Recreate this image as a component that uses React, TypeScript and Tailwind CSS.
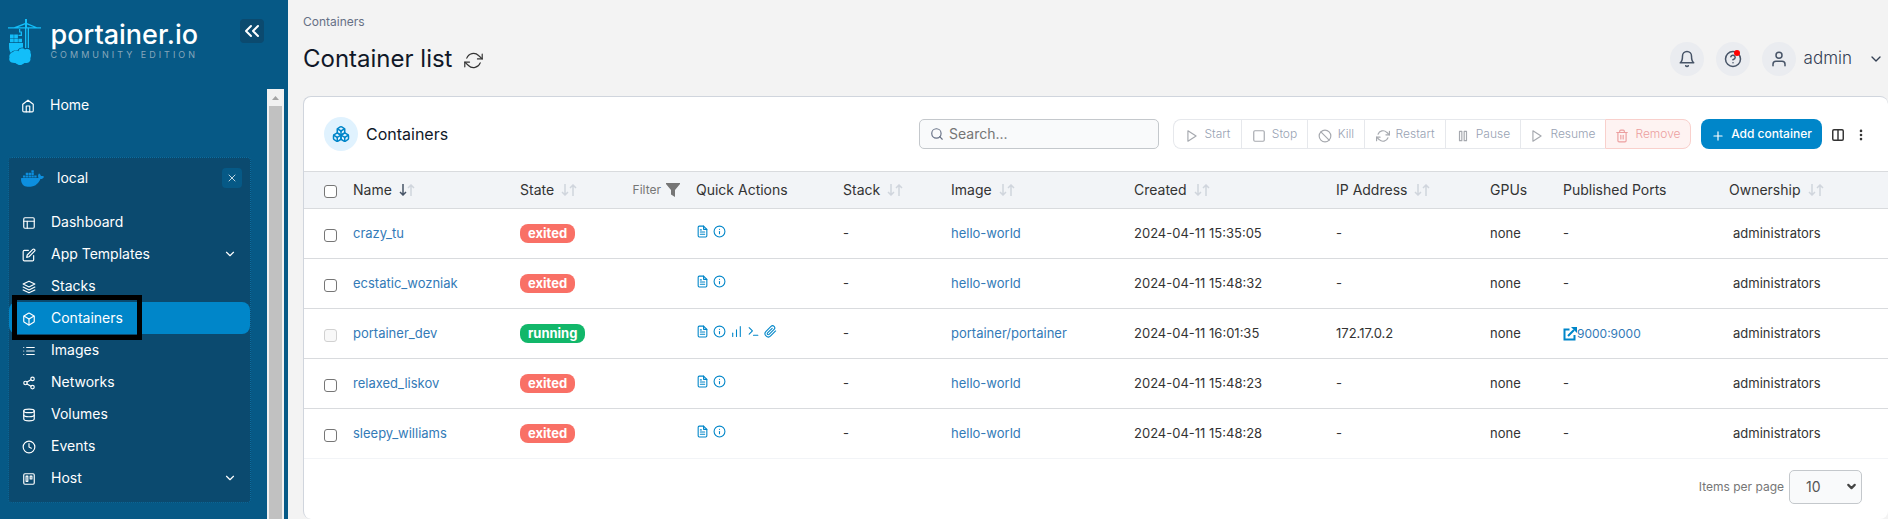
import type { ComponentType, ReactNode } from 'react';
import {
  FiBell, FiBox, FiChevronDown, FiClock, FiColumns, FiDatabase, FiEdit, FiFileText, FiHelpCircle,
  FiHome, FiInfo, FiLayers, FiLayout, FiList, FiMoreVertical, FiPaperclip, FiPause, FiPlay, FiPlus,
  FiRefreshCw, FiSearch, FiShare2, FiSlash, FiSquare, FiTerminal, FiTrash2, FiTrello, FiUser, FiX,
} from 'react-icons/fi';
import { SiDocker } from 'react-icons/si';
import { Boxes, ChartNoAxesColumnIncreasing, ChevronsLeft } from 'lucide-react';

type IconType = ComponentType<{ className?: string }>;

const navItems: { label: string; icon: IconType; active?: boolean; expandable?: boolean }[] = [
  { label: 'Dashboard', icon: FiLayout },
  { label: 'App Templates', icon: FiEdit, expandable: true },
  { label: 'Stacks', icon: FiLayers },
  { label: 'Containers', icon: FiBox, active: true },
  { label: 'Images', icon: FiList },
  { label: 'Networks', icon: FiShare2 },
  { label: 'Volumes', icon: FiDatabase },
  { label: 'Events', icon: FiClock },
  { label: 'Host', icon: FiTrello, expandable: true },
];

const bulkActions: { label: string; icon: IconType; width: string }[] = [
  { label: 'Start', icon: FiPlay, width: 'w-[68px]' },
  { label: 'Stop', icon: FiSquare, width: 'w-[66px]' },
  { label: 'Kill', icon: FiSlash, width: 'w-[57px]' },
  { label: 'Restart', icon: FiRefreshCw, width: 'w-[81px]' },
  { label: 'Pause', icon: FiPause, width: 'w-[75px]' },
  { label: 'Resume', icon: FiPlay, width: 'w-[85px]' },
];

const containers = [
  { name: 'crazy_tu', state: 'exited', image: 'hello-world', created: '2024-04-11 15:35:05', ip: '-', port: '' },
  { name: 'ecstatic_wozniak', state: 'exited', image: 'hello-world', created: '2024-04-11 15:48:32', ip: '-', port: '' },
  { name: 'portainer_dev', state: 'running', image: 'portainer/portainer', created: '2024-04-11 16:01:35', ip: '172.17.0.2', port: '9000:9000' },
  { name: 'relaxed_liskov', state: 'exited', image: 'hello-world', created: '2024-04-11 15:48:23', ip: '-', port: '' },
  { name: 'sleepy_williams', state: 'exited', image: 'hello-world', created: '2024-04-11 15:48:28', ip: '-', port: '' },
];

function SortArrows({ active = false }: { active?: boolean }) {
  return (
    <svg viewBox="0 0 16 12" className="ml-[7px] h-3 w-4 shrink-0" fill="none" strokeWidth="1.5">
      <path d="M4 0V11M1 8L4 11L7 8" stroke={active ? '#475467' : '#d0d5dd'} />
      <path d="M12 12V1M9 4L12 1L15 4" stroke="#d0d5dd" />
    </svg>
  );
}

function Heading({ children, sort }: { children: ReactNode; sort?: 'active' | 'idle' }) {
  return (
    <th className="px-2 text-left font-normal">
      <div className="flex items-center whitespace-nowrap">
        {children}
        {sort && <SortArrows active={sort === 'active'} />}
      </div>
    </th>
  );
}

function Checkbox({ label, disabled = false }: { label: string; disabled?: boolean }) {
  return (
    <input
      type="checkbox"
      aria-label={label}
      disabled={disabled}
      className="mt-[3px] block size-[13px] appearance-none rounded-[3px] border border-[#767676] bg-white disabled:border-[#d1d1d1] disabled:bg-[#f8f8f8]"
    />
  );
}

function RoundButton({ label, children }: { label: string; children: ReactNode }) {
  return (
    <button aria-label={label} className="relative flex size-[34px] items-center justify-center rounded-full bg-[#eaecf0] text-[#475467]">
      {children}
    </button>
  );
}

function Sidebar() {
  return (
    <aside className="flex w-72 shrink-0 flex-col bg-[#065986] text-white">
      <div className="flex h-[89px] shrink-0 items-start pl-2 pr-6 pt-[19px]">
        <svg viewBox="0 0 33 46" className="h-[46px] w-[33px] shrink-0" fill="#13bef9">
          <path d="M17 0h2v4l10 4.200h4v1.300H21V29h-1.300V9.500H18.300V29H17V9.500H0V8.200h6l11-4.200zM17 5.500l-7 2.700h7zM19 5.500v2.700h7z" />
          <path d="M11 10h1.300v2.500H14V17h-3.500v-1.300h2.200V13.600H11zM2 15.500h3.700v3.700H2zM6.200 15.500h3.700v3.700H6.200zM2 19.800h3.700v3.500H2zM6.200 19.800h3.700v3.500H6.200zM10.400 19.800H14v3.500h-3.600z" />
          <path d="M1 24h14V28.500c-3 0-4.500 1-5.500 3C6.500 31 4 32 3 34C1.500 32.500 1 30 1 27z" />
          <path d="M5 33c2-2 4-1.500 5.500-.8C11 29 15 28.500 17 30.500c4-1.500 6 1 5.500 3.500c1.500 3-.5 4.500 0 6.500c-.5 3-3 3.500-5.500 3.500c-1.500 0-2 2-5 2s-3.500-2-5.500-2C2 44 .5 41 1.500 38.500C.5 36 3 33.500 5 33z" />
        </svg>
        <div className="flex flex-1 flex-col items-end pr-[42px]">
          <span className="text-[27px] font-medium leading-8">portainer.io</span>
          <span className="whitespace-nowrap text-[9px] leading-2 tracking-[3px] text-[#86a7bb]">COMMUNITY EDITION</span>
        </div>
        <button aria-label="Collapse sidebar" className="flex size-6 items-center justify-center rounded-sm bg-[#0b4a6f]">
          <ChevronsLeft className="size-6" strokeWidth={2} />
        </button>
      </div>
      <div className="flex flex-1 pr-1">
        <nav className="flex flex-1 flex-col pl-2 pr-4 text-sm">
          <a href="#home" className="flex h-8 items-center gap-[15px] pl-[13px]">
            <FiHome className="mt-0.5 size-[14px]" />
            Home
          </a>
          <div className="mt-9 rounded border border-dotted border-[#0a6fa3] bg-[#0b4a6f] pb-2">
            <div className="flex h-10 items-center pl-3 pr-2">
              <SiDocker className="size-[23px] text-[#0d8fdf]" />
              <span className="ml-[13px] flex-1">local</span>
              <button aria-label="Close environment" className="flex size-5 items-center justify-center rounded bg-[#065986]">
                <FiX className="size-3" strokeWidth={1.5} />
              </button>
            </div>
            <ul className="mt-2">
              {navItems.map(({ label, icon: Icon, active, expandable }) => (
                <li key={label} className="relative">
                  <a
                    href={'#' + label}
                    className={active ? 'flex h-8 items-center rounded-lg bg-[#0086c9] pl-[13px] pr-[13px]' : 'flex h-8 items-center pl-[13px] pr-[13px]'}
                  >
                    <Icon className="mt-0.5 size-[14px]" />
                    <span className="ml-[15px] flex-1">{label}</span>
                    {expandable && <FiChevronDown className="size-[14px]" />}
                  </a>
                  {active && <div className="pointer-events-none absolute -top-[7px] left-[3px] h-[45px] w-[130px] border-5 border-black" />}
                </li>
              ))}
            </ul>
          </div>
        </nav>
        <div className="flex w-[17px] flex-col bg-[#f1f1f1]">
          <svg viewBox="0 0 17 17" className="h-[17px] w-[17px] shrink-0">
            <path d="M8.500 7L12 11H5z" fill="#a3a3a3" />
          </svg>
          <div className="mx-0.5 flex-1 bg-[#c1c1c1]" />
        </div>
      </div>
    </aside>
  );
}

function PageHeader() {
  return (
    <header className="pt-3">
      <div className="text-xs leading-5 text-[#667085]">Containers</div>
      <div className="mt-2.5 flex h-[34px] items-center">
        <h1 className="text-2xl text-[#101828]">Container list</h1>
        <button aria-label="Refresh" className="ml-3 mt-0.5 text-[#333333]">
          <FiRefreshCw className="size-[19px]" strokeWidth={1.5} />
        </button>
        <div className="ml-auto flex items-center gap-3 pr-1">
          <RoundButton label="Notifications"><FiBell className="size-[18px]" /></RoundButton>
          <RoundButton label="Help">
            <FiHelpCircle className="size-[18px]" />
            <span className="absolute right-2.5 top-2 size-1.5 rounded-full bg-[#ff0000]" />
          </RoundButton>
          <button className="flex items-center text-[17px] text-[#344054]">
            <span className="mr-2 flex size-[34px] items-center justify-center rounded-full bg-[#eaecf0] text-[#475467]">
              <FiUser className="size-[18px]" />
            </span>
            <span className="font-light">admin</span>
            <FiChevronDown className="ml-4 size-4" />
          </button>
        </div>
      </div>
    </header>
  );
}

function Toolbar() {
  return (
    <div className="flex h-[74px] items-center px-5">
      <span className="flex size-[34px] items-center justify-center rounded-full bg-[#e0f2fe] text-[#0086c9]">
        <Boxes className="size-[18px]" />
      </span>
      <h2 className="ml-2 text-base text-[#101828]">Containers</h2>
      <label className="ml-auto flex h-[30px] w-60 items-center rounded-[5px] border border-[#c4c8cc] bg-[#f9fafb] pl-2.5 text-[#667085]">
        <FiSearch className="size-[14px] shrink-0" />
        <input aria-label="Search" placeholder="Search..." className="ml-[5px] min-w-0 flex-1 bg-transparent text-sm outline-none placeholder:text-[#757575]" />
      </label>
      <div className="ml-3.5 flex h-[30px] text-xs font-light text-[#98a2b3]">
        {bulkActions.map(({ label, icon: Icon, width }) => (
          <button key={label} disabled className={width + ' flex items-center justify-center gap-1.5 border border-r-0 border-[#e6e8ec] first:rounded-l-lg'}>
            <Icon className="mt-1 size-[14px] text-[#a6a9af]" />
            {label}
          </button>
        ))}
        <button disabled className="flex w-[86px] items-center justify-center gap-1.5 rounded-r-lg border border-[#f9d0cc] bg-[#fef3f2] text-[#ec9f9f]">
          <FiTrash2 className="mt-1 size-[14px]" />
          Remove
        </button>
      </div>
      <button className="ml-2.5 flex h-[30px] w-[121px] items-center justify-center gap-1.5 rounded-lg bg-[#0086c9] text-xs font-medium text-white">
        <FiPlus className="mt-1 size-[14px]" />
        Add container
      </button>
      <button aria-label="Columns" className="ml-[9px] mt-0.5 text-[#333333]"><FiColumns className="size-[14px]" strokeWidth={2.5} /></button>
      <button aria-label="Table settings" className="ml-[9px] mt-0.5 text-[#333333]"><FiMoreVertical className="size-[14px]" strokeWidth={2.5} /></button>
    </div>
  );
}

function ContainerTable() {
  return (
    <table className="w-full table-fixed border-collapse">
      <colgroup>
        <col className="w-[41px]" />
        <col className="w-[167px]" />
        <col className="w-[176px]" />
        <col className="w-[147px]" />
        <col className="w-[108px]" />
        <col className="w-[183px]" />
        <col className="w-[202px]" />
        <col className="w-[154px]" />
        <col className="w-[73px]" />
        <col className="w-[166px]" />
        <col />
      </colgroup>
      <thead>
        <tr className="h-[37px] border-y border-[#d9dbde] bg-[#f2f4f7] text-sm text-[#333333]">
          <th className="pl-5"><Checkbox label="Select all containers" /></th>
          <Heading sort="active">Name</Heading>
          <th className="px-2 text-left font-normal">
            <div className="flex items-center">
              State
              <SortArrows />
              <button className="ml-auto flex items-center gap-[5px] text-xs text-[#767676]">
                Filter
                <svg viewBox="0 0 14 14" className="size-[14px]" fill="#767676"><path d="M0 0h14v1L9 7v7L5 11.500V7L0 1z" /></svg>
              </button>
            </div>
          </th>
          <Heading>Quick Actions</Heading>
          <Heading sort="idle">Stack</Heading>
          <Heading sort="idle">Image</Heading>
          <Heading sort="idle">Created</Heading>
          <Heading sort="idle">IP Address</Heading>
          <Heading>GPUs</Heading>
          <Heading>Published Ports</Heading>
          <Heading sort="idle">Ownership</Heading>
        </tr>
      </thead>
      <tbody className="text-[13px] text-[#333333]">
        {containers.map((c) => (
          <tr key={c.name} className="h-[50px] border-b border-[#d9dbde] last:border-[#f2f4f7]">
            <td className="pl-5"><Checkbox label={'Select ' + c.name} disabled={c.state === 'running'} /></td>
            <td className="px-2"><a href={'#' + c.name} className="text-[#337ab7]">{c.name}</a></td>
            <td className="px-2">
              <span
                className={
                  c.state === 'running'
                    ? 'inline-block h-[19px] rounded-lg bg-[#12b76a] px-2 font-bold leading-[19px] text-white'
                    : 'inline-block h-[19px] rounded-lg bg-[#f97066] px-2 font-bold leading-[19px] text-white'
                }
              >
                {c.state}
              </span>
            </td>
            <td className="px-2 text-[#0086c9]">
              <div className="mb-1 flex gap-1">
                <a href="#logs" aria-label="Logs"><FiFileText className="size-[13px]" /></a>
                <a href="#inspect" aria-label="Inspect"><FiInfo className="size-[13px]" /></a>
                {c.state === 'running' && (
                  <>
                    <a href="#stats" aria-label="Stats"><ChartNoAxesColumnIncreasing className="size-[13px]" /></a>
                    <a href="#console" aria-label="Console"><FiTerminal className="size-[13px]" /></a>
                    <a href="#attach" aria-label="Attach"><FiPaperclip className="size-[13px]" /></a>
                  </>
                )}
              </div>
            </td>
            <td className="px-2">-</td>
            <td className="px-2"><a href="#image" className="text-[#337ab7]">{c.image}</a></td>
            <td className="px-2">{c.created}</td>
            <td className="px-2">{c.ip}</td>
            <td className="px-2">none</td>
            <td className="px-2">
              {c.port ? (
                <a href="#port" className="flex items-center text-xs text-[#337ab7]">
                  <svg viewBox="0 0 14 14" className="size-[14px]" fill="none" stroke="#0086c9" strokeWidth="2">
                    <path d="M6.500 2.500H1.500V12.500H11.500V8M5 9L11 3" />
                    <path d="M8 0H14V6z" fill="#0086c9" stroke="none" />
                  </svg>
                  {c.port}
                </a>
              ) : '-'}
            </td>
            <td className="px-3">administrators</td>
          </tr>
        ))}
      </tbody>
    </table>
  );
}

export default function App() {
  return (
    <div className="flex min-h-screen bg-[#f3f3f3] font-['Inter',sans-serif]">
      <Sidebar />
      <main className="flex min-w-0 flex-1 flex-col pl-[15px]">
        <PageHeader />
        <section className="mt-5 flex-1 rounded-lg border border-b-0 border-r-0 border-[#d0d5dd] bg-white">
          <Toolbar />
          <ContainerTable />
          <div className="flex items-center justify-end gap-[5px] pr-[26px] pt-[11px] text-xs text-[#767676]">
            <label htmlFor="page-size">Items per page</label>
            <div className="relative">
              <select id="page-size" defaultValue="10" className="h-[34px] w-[73px] appearance-none rounded-[5px] border border-[#c4c8cc] bg-[#f9fafb] pl-4 text-sm text-[#555555]">
                <option>10</option>
                <option>25</option>
                <option>50</option>
                <option>100</option>
              </select>
              <FiChevronDown className="pointer-events-none absolute right-1 top-2.5 size-[13px] text-[#444444]" strokeWidth={4} />
            </div>
          </div>
        </section>
      </main>
    </div>
  );
}
